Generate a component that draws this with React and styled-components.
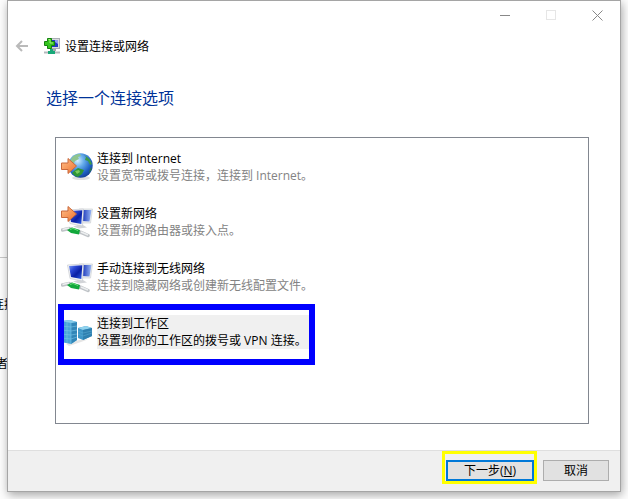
import { useState } from "react"
import styled, { createGlobalStyle } from "styled-components"

const options = [
    { id: "internet", icon: GlobeIcon, title: "连接到 Internet", text: "设置宽带或拨号连接，连接到 Internet。" },
    { id: "router", icon: RouterIcon, title: "设置新网络", text: "设置新的路由器或接入点。" },
    { id: "wireless", icon: WirelessIcon, title: "手动连接到无线网络", text: "连接到隐藏网络或创建新无线配置文件。" },
    { id: "workplace", icon: ServerIcon, title: "连接到工作区", text: "设置到你的工作区的拨号或 VPN 连接。", marked: true },
]

export default function App() {
    const [selected, setSelected] = useState("workplace")

    return (
        <Desktop>
            <GlobalStyle />
            <Behind aria-hidden="true">
                <p>连接</p>
                <p>者</p>
            </Behind>
            <Window>
                <TitleBar>
                    <WindowButton aria-label="最小化">
                        <svg width="11" height="11"><path d="M0 5.5H10" /></svg>
                    </WindowButton>
                    <WindowButton aria-label="最大化" disabled>
                        <svg width="11" height="11"><rect x="0.5" y="0.5" width="9" height="9" /></svg>
                    </WindowButton>
                    <WindowButton aria-label="关闭">
                        <svg width="11" height="11"><path d="M0.5 0.5L10.5 10.5M10.5 0.5L0.5 10.5" /></svg>
                    </WindowButton>
                </TitleBar>
                <Header>
                    <BackButton aria-label="返回" disabled>
                        <svg width="14" height="12" viewBox="0 0 14 12">
                            <path d="M2 6H13M7 1L2 6L7 11" />
                        </svg>
                    </BackButton>
                    <NetworkIcon />
                    <p>设置连接或网络</p>
                </Header>
                <Heading>选择一个连接选项</Heading>
                <OptionList role="listbox" aria-label="选择一个连接选项">
                    {options.map((o) => (
                        <Option
                            key={o.id}
                            type="button"
                            role="option"
                            aria-selected={selected === o.id}
                            onClick={() => setSelected(o.id)}
                        >
                            <o.icon />
                            <OptionText $selected={selected === o.id}>
                                <strong>{o.title}</strong>
                                <span>{o.text}</span>
                            </OptionText>
                            {o.marked && <BlueMark />}
                        </Option>
                    ))}
                </OptionList>
                <Footer>
                    <ButtonSlot>
                        <Button $primary>下一步(<u>N</u>)</Button>
                        <YellowMark />
                    </ButtonSlot>
                    <Button>取消</Button>
                </Footer>
            </Window>
        </Desktop>
    )
}

function NetworkIcon() {
    return (
        <svg width="16" height="17" viewBox="0 0 16 17">
            <rect x="5.5" y="0.5" width="10" height="10" fill="#d9dce0" stroke="#a9adb5" />
            <rect x="7" y="2" width="7" height="7" fill="#2438c4" />
            <path d="M11 2H14V6L11 4Z" fill="#8f9df0" />
            <path d="M8 11H12V13H8Z" fill="#a4a8ac" />
            <path d="M0 14.5H16" stroke="#b4b8bc" strokeWidth="2" />
            <path d="M4 13H11V16H4Z" fill="#18a878" />
            <path d="M6 11H9V13H6Z" fill="#18a878" />
            <path d="M3.5 0.5H7.5V3.5H10.5V7.5H7.5V10.5H3.5V7.5H0.5V3.5H3.5Z" fill="#35c51e" stroke="#14820f" />
            <path d="M4.5 1.5H6V5H9" fill="none" stroke="#a4f07c" />
        </svg>
    )
}

function Arrow() {
    return (
        <path
            d="M0.5 10H7V5.5L15.5 13L7 20.5V16.5H0.5Z"
            fill="url(#orange)"
            stroke="#c9693c"
        />
    )
}

function GlobeIcon() {
    return (
        <svg width="32" height="32" viewBox="0 0 32 32">
            <defs>
                <radialGradient id="ocean" cx="0.38" cy="0.3" r="0.75">
                    <stop offset="0" stopColor="#d5efff" />
                    <stop offset="0.35" stopColor="#65aceb" />
                    <stop offset="0.75" stopColor="#1e60c4" />
                    <stop offset="1" stopColor="#163f92" />
                </radialGradient>
                <linearGradient id="orange" x1="0" y1="0" x2="1" y2="1">
                    <stop offset="0" stopColor="#ffc08a" />
                    <stop offset="1" stopColor="#ee702d" />
                </linearGradient>
            </defs>
            <ellipse cx="20" cy="27" rx="9" ry="2" fill="#000" opacity="0.12" />
            <circle cx="19.5" cy="14.5" r="12.2" fill="url(#ocean)" />
            <path d="M10 8Q13 3 19 3L20 5L17 6L18 8L14 10L12 14L10 13L8 14Z" fill="#8fc58e" />
            <path d="M23 4Q29 7 31 13L29 14L27 10L24 9L25 6Z" fill="#3c9a48" />
            <path d="M13 20L17 17L23 19L21 23L17 26Q13 25 11 22Z" fill="#2f9636" />
            <path d="M14 20L18 19L19 21L16 23Z" fill="#7bcb5c" />
            <path d="M29 18L31 16Q30 20 28 22Z" fill="#2e8140" />
            <g transform="translate(0 2)"><Arrow /></g>
        </svg>
    )
}

function Monitors() {
    return (
        <g>
            <defs>
                <linearGradient id="screen" x1="0" y1="0" x2="1" y2="1">
                    <stop offset="0" stopColor="#7d9bf2" />
                    <stop offset="0.3" stopColor="#2c49d6" />
                    <stop offset="0.6" stopColor="#0a1fa4" />
                    <stop offset="1" stopColor="#2c5fe6" />
                </linearGradient>
                <linearGradient id="screenBack" x1="0" y1="0" x2="1" y2="0">
                    <stop offset="0" stopColor="#1430b8" />
                    <stop offset="1" stopColor="#9ab8f4" />
                </linearGradient>
            </defs>
            <path d="M18 3L31.5 3L29.5 17L19 17Z" fill="#eceef0" stroke="#cfd2d6" strokeWidth="0.7" />
            <path d="M21 4L30.5 4L28.5 15.5L21 15Z" fill="url(#screenBack)" />
            <path d="M17 19H22L26 21.5L18 22.5L12 20.5Z" fill="#d3d5d8" />
            <path d="M6.5 4L22.5 3L21.5 20L9 17.5Z" fill="#f2f3f5" stroke="#c8ccd1" strokeWidth="0.7" />
            <path d="M8 5L21.3 4.2L20.3 18L10 16Z" fill="url(#screen)" />
            <path d="M1.5 24L8 22.5L20 26.5L27 29.5" fill="none" stroke="#bfc3c7" strokeWidth="3.5" strokeLinecap="round" />
            <path d="M1.5 23.5L8 22M20 26L27 29" fill="none" stroke="#eceeef" strokeWidth="1.5" />
            <path d="M6 24L11 21.5L19 24L18 28.5L10 27Z" fill="#12a83b" />
            <path d="M9 23.5L12 22.5L17 24.5" fill="none" stroke="#65dd75" />
        </g>
    )
}

function RouterIcon() {
    return (
        <svg width="32" height="32" viewBox="0 0 32 32">
            <Monitors />
            <g transform="translate(0 -5)"><Arrow /></g>
        </svg>
    )
}

function WirelessIcon() {
    return (
        <svg width="32" height="32" viewBox="0 0 32 32">
            <Monitors />
        </svg>
    )
}

function ServerIcon() {
    return (
        <svg width="32" height="32" viewBox="0 0 32 32">
            <path d="M5 28L18 24L28 23L20 26L8 30Z" fill="#000" opacity="0.1" />
            <path d="M17 12L25 10L31 12V20L22 24L17 22Z" fill="#3f97c8" />
            <path d="M17 12L25 10L31 12L22 14Z" fill="#91d3ee" />
            <path d="M22 14L31 12V20L22 24Z" fill="#2f80b0" />
            <path d="M17 15L22 17L31 15M17 18L22 20L31 17" fill="none" stroke="#5eafd5" strokeWidth="0.5" />
            <path d="M0 5L9 4L16 6V24L10 28L0 26Z" fill="#48a5d8" />
            <path d="M10 7L16 6V24L10 28Z" fill="#3186b8" />
            <path d="M0 5L9 4L16 6L10 7Z" fill="#86cbe9" />
            <path d="M0 10L10 11L16 10M0 14L10 15L16 14M0 18L10 19L16 18M0 22L10 23L16 21M6 6V27M10 7V28" fill="none" stroke="#79c4e6" strokeWidth="0.6" />
        </svg>
    )
}

const GlobalStyle = createGlobalStyle`
    * {
        box-sizing: border-box;
    }

    body {
        margin: 0;
        background: #fdfdfd;
        font-family: "Open Sans", "Noto Sans CJK SC", sans-serif;
        font-size: 12px;
        line-height: 17px;
        color: #000;
    }

    button {
        font: inherit;
        color: inherit;
    }

    p, h1 {
        margin: 0;
    }

    svg {
        display: block;
        flex-shrink: 0;
    }
`

const Desktop = styled.div`
    position: relative;
    display: flex;
    min-height: 100vh;
    padding: 0 7px 7px;
`

/* page that shows beside the left edge of the dialog */
const Behind = styled.div`
    position: absolute;
    top: 257px;
    left: -8px;
    padding-top: 38px;
    border-top: 1px solid #c8c8c8;
    display: flex;
    flex-direction: column;
    gap: 42px;

    p {
        white-space: nowrap;
    }

    p + p {
        padding-left: 4px;
    }
`

const Window = styled.main`
    position: relative;
    flex: 1;
    min-width: 0;
    display: flex;
    flex-direction: column;
    border: 1px solid #a5a5a5;
    background: #fff;
    box-shadow: 1px 3px 9px rgba(0, 0, 0, 0.35);
`

const TitleBar = styled.div`
    display: flex;
    justify-content: flex-end;
    height: 29px;
`

const WindowButton = styled.button`
    display: flex;
    align-items: center;
    justify-content: center;
    width: 46px;
    padding: 0;
    border: none;
    background: none;

    svg {
        fill: none;
        stroke: #888;
    }

    &:disabled svg {
        stroke: #e6e6e6;
    }
`

const Header = styled.header`
    display: flex;
    align-items: center;
    height: 32px;
    padding-left: 7px;

    p {
        margin-left: 5px;
    }
`

const BackButton = styled.button`
    margin-right: 15px;
    padding: 0;
    border: none;
    background: none;

    svg {
        fill: none;
        stroke: #bababa;
        stroke-width: 2;
    }
`

const Heading = styled.h1`
    margin: 24px 38px 0;
    font-size: 16px;
    font-weight: 400;
    line-height: 24px;
    color: #003399;
`

const OptionList = styled.div`
    flex: 1;
    display: flex;
    flex-direction: column;
    align-items: flex-start;
    gap: 21px;
    margin: 27px 31px 26px 47px;
    padding: 12px 5px;
    border: 1px solid #828790;
`

const Option = styled.button`
    position: relative;
    display: flex;
    align-items: center;
    gap: 4px;
    padding: 0;
    border: none;
    background: none;
    text-align: left;
`

const OptionText = styled.span`
    display: flex;
    flex-direction: column;
    padding-right: 2px;
    background: ${(props) => (props.$selected ? "#f0f0f0" : "none")};

    strong {
        font-weight: 400;
    }

    span {
        color: ${(props) => (props.$selected ? "#000" : "#838383")};
    }
`

const BlueMark = styled.i`
    position: absolute;
    inset: -11px -6px -16px -3px;
    border: 6px solid #0000ff;
    pointer-events: none;
`

const Footer = styled.footer`
    display: flex;
    justify-content: flex-end;
    gap: 9px;
    padding: 9px 11px 10px;
    border-top: 1px solid #dfdfdf;
    background: #f0f0f0;
`

const ButtonSlot = styled.div`
    position: relative;
`

const Button = styled.button`
    width: ${(props) => (props.$primary ? "88px" : "66px")};
    height: 21px;
    padding: 0;
    border: ${(props) => (props.$primary ? "2px solid #0078d7" : "1px solid #adadad")};
    background: #e1e1e1;
    line-height: 17px;
`

const YellowMark = styled.i`
    position: absolute;
    inset: -9px -3px -3px -4px;
    border: 3px solid #ffff00;
    pointer-events: none;
`
